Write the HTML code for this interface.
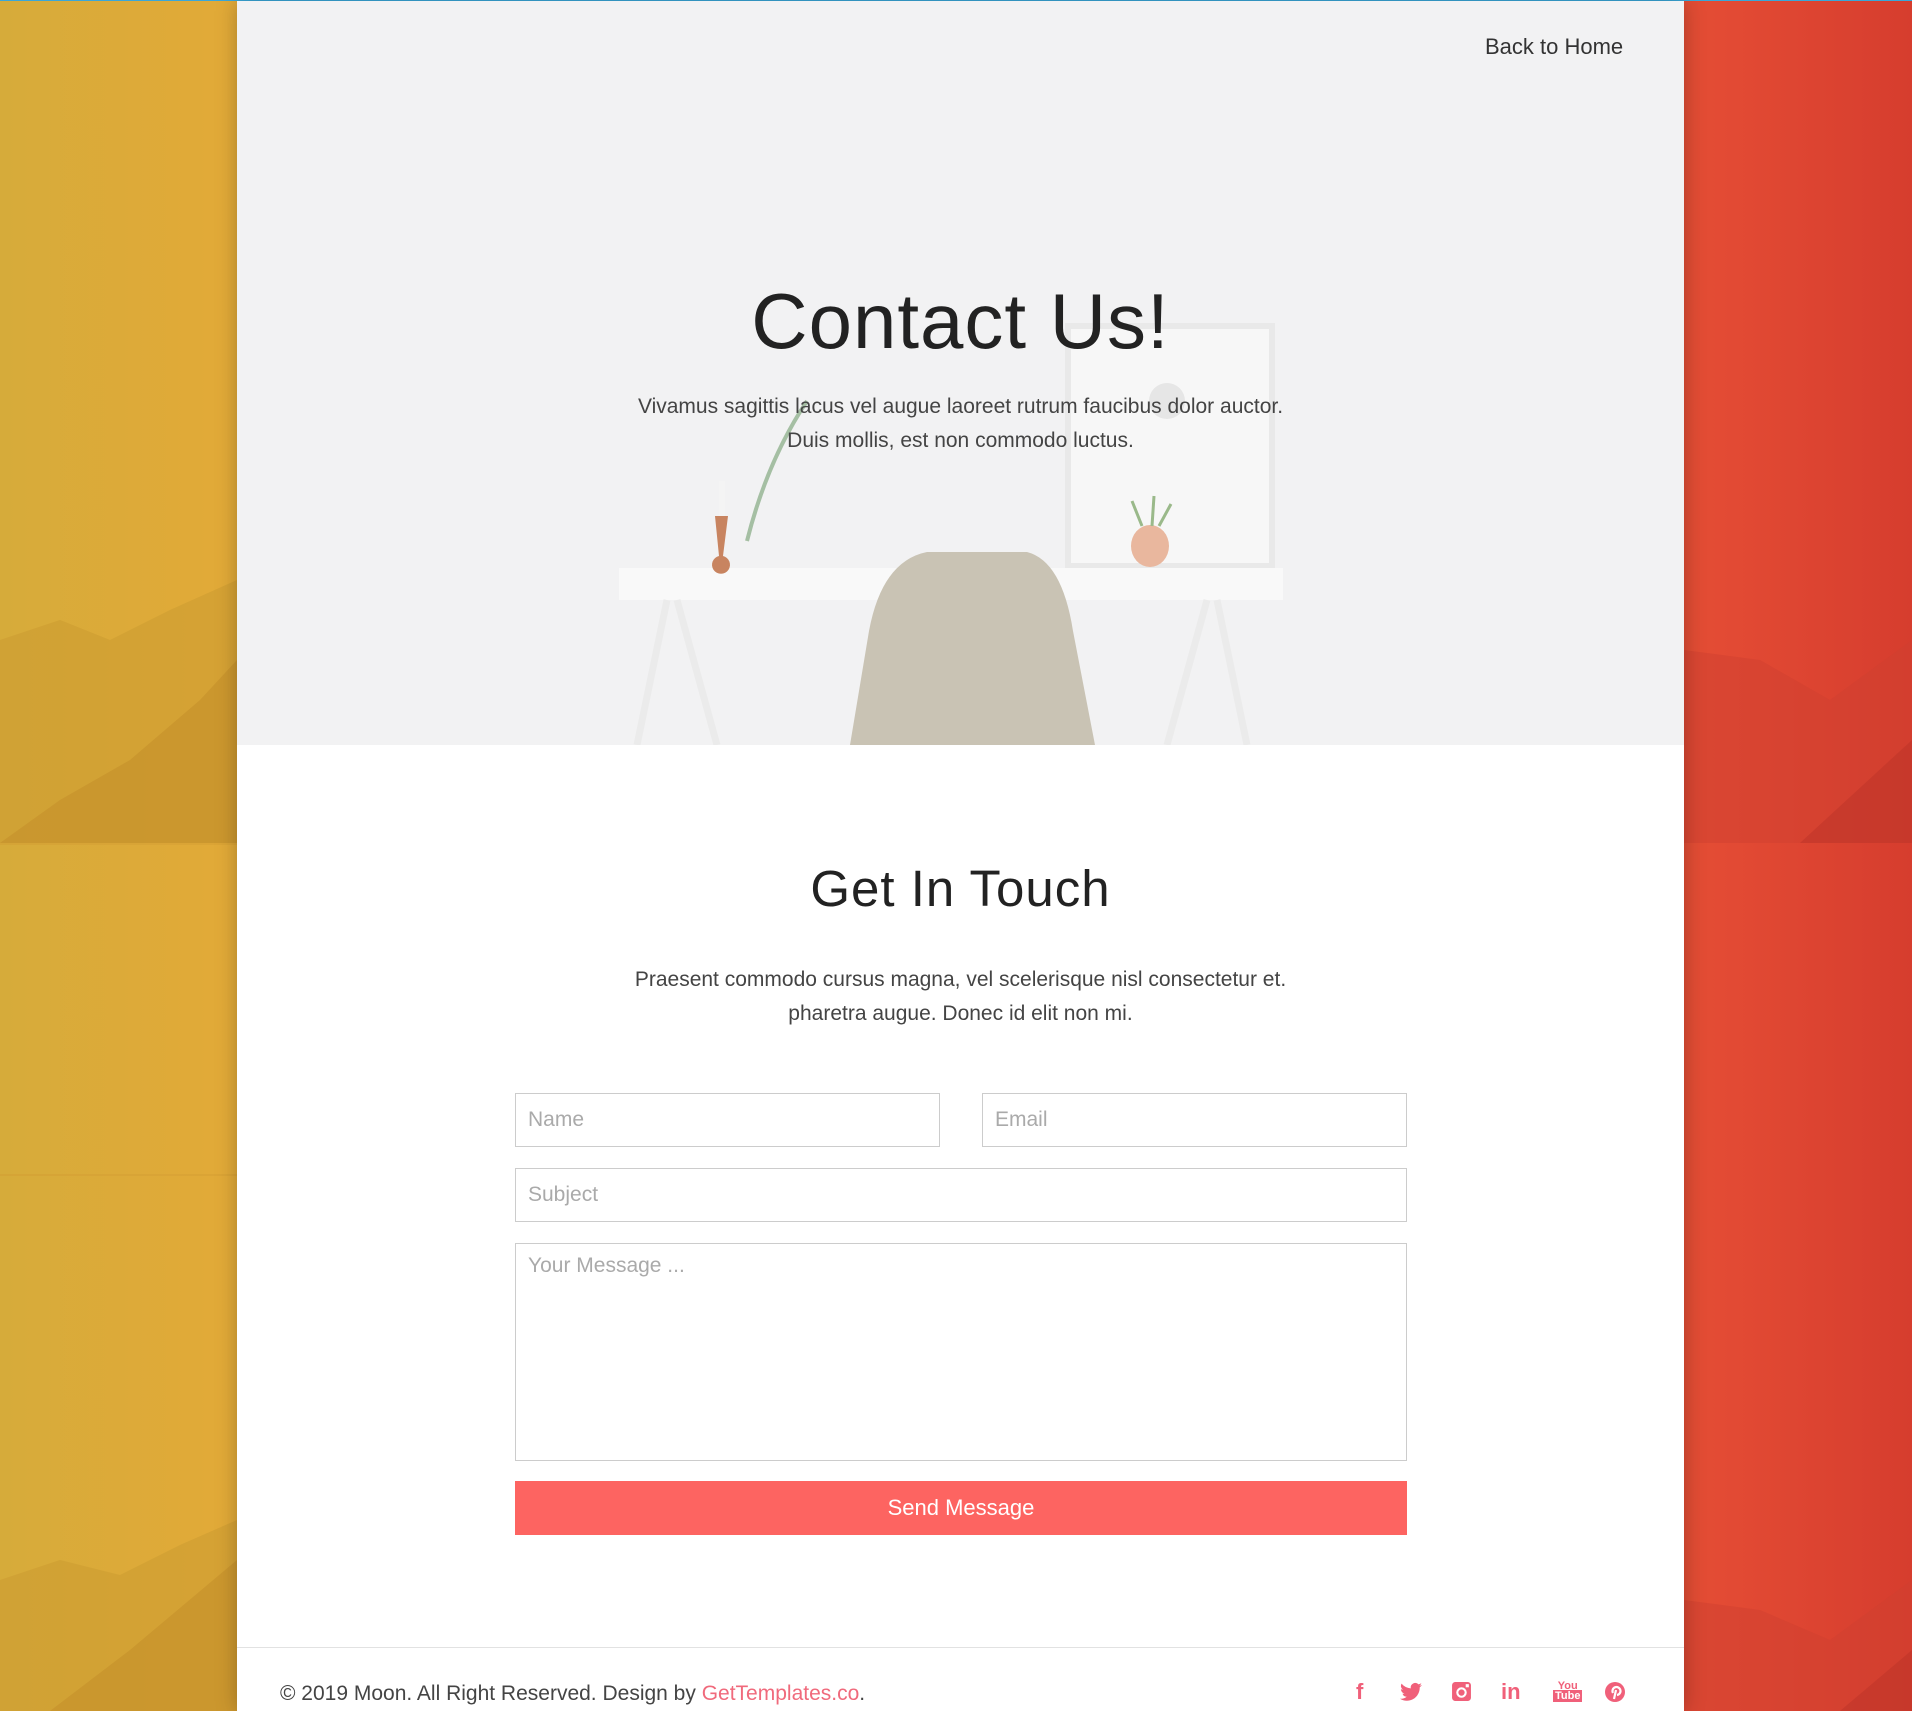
<!DOCTYPE html>
<html><head><meta charset="utf-8"><style>
html,body{margin:0;padding:0}
body{width:1912px;height:1711px;overflow:hidden;position:relative;font-family:"Liberation Sans",sans-serif;
background:linear-gradient(90deg,#d6ab3a 0%,#e2aa38 12%,#e0a536 20%,#d9833a 40%,#dc5c35 75%,#e34b34 90%,#d63d2e 100%);}
.bgsvg{position:absolute;left:0;top:0}
.topline{position:absolute;left:0;top:0;width:1912px;height:1px;background:#3aa7d8}
.wrap{position:absolute;left:237px;top:1px;width:1447px;height:1710px;background:#fff;box-shadow:0 0 20px rgba(0,0,0,.25)}
.hero{position:absolute;left:0;top:0;width:1447px;height:744px;background:#f2f2f3;overflow:hidden}
.hero svg{position:absolute;left:0;top:0}
.back{position:absolute;left:1248px;top:33px;font-size:22px;color:#333;font-weight:300}
h1{position:absolute;left:0;width:1447px;top:275px;margin:0;text-align:center;font-weight:300;font-size:78px;color:#222;letter-spacing:1px}
.p1{position:absolute;left:0;width:1447px;top:389px;text-align:center;font-size:21px;line-height:34px;color:#444}
h2{position:absolute;left:0;width:1447px;top:858px;margin:0;text-align:center;font-weight:300;font-size:51px;color:#222;letter-spacing:1px}
.p2{position:absolute;left:0;width:1447px;top:962px;text-align:center;font-size:21px;line-height:34px;color:#444}
.in{position:absolute;border:1px solid #ccc;box-sizing:border-box;font-size:21px;color:#aaa;padding-left:12px;background:#fff}
.btn{position:absolute;left:278px;top:1480px;width:892px;height:54px;background:#fd6461;color:#fff;font-size:22px;text-align:center;line-height:54px}
.fline{position:absolute;left:0;top:1646px;width:1447px;height:1px;background:#e2e2e2}
.foot{position:absolute;left:43px;top:1681px;font-size:21px;color:#444}
.foot a{color:#f06a7c;text-decoration:none}
.ic{position:absolute;top:1678px;color:#f0607a;font-size:22px;font-weight:bold}
</style></head><body>
<svg class="bgsvg" width="1912" height="1711">
<path d="M0 640 L60 620 L110 640 L170 610 L237 580 L237 843 L0 843Z" fill="#c99a30" opacity=".5"/>
<path d="M0 843 L60 800 L130 760 L200 700 L237 660 L237 843Z" fill="#c48f2c" opacity=".6"/>
<path d="M0 1580 L60 1560 L120 1575 L180 1545 L237 1520 L237 1711 L0 1711Z" fill="#c99a30" opacity=".5"/>
<path d="M50 1711 L130 1650 L237 1560 L237 1711Z" fill="#c48f2c" opacity=".6"/>
<path d="M1684 650 L1760 660 L1830 700 L1912 640 L1912 843 L1684 843Z" fill="#cf4030" opacity=".5"/>
<path d="M1800 843 L1912 740 L1912 843Z" fill="#c0352a" opacity=".6"/>
<path d="M1684 1600 L1760 1610 L1830 1640 L1912 1580 L1912 1711 L1684 1711Z" fill="#cf4030" opacity=".5"/>
<path d="M1840 1711 L1912 1650 L1912 1711Z" fill="#c0352a" opacity=".6"/>
<rect x="0" y="843" width="237" height="2" fill="#d19b33" opacity=".4"/>
<rect x="0" y="1174" width="237" height="2" fill="#d19b33" opacity=".4"/>
</svg>
<div class="topline"></div>
<div class="wrap">
<div class="hero">
<svg width="1447" height="744">
<rect x="831" y="325" width="204" height="240" fill="#f7f7f7" stroke="#e9e9e9" stroke-width="6"/>
<circle cx="930" cy="400" r="18" fill="#e6e6e6"/>
<rect x="382" y="567" width="664" height="32" fill="#f9f9f9"/>
<path d="M430 599 L400 744 M440 599 L480 744 M980 599 L1010 744 M970 599 L930 744" stroke="#ebebeb" stroke-width="7"/>
<path d="M478 515 l13 0 l-5 40 a9 9 0 1 1 -4 0z" fill="#c88460"/>
<rect x="482" y="480" width="6" height="35" fill="#f4f4f4"/>
<path d="M510 540 q20 -80 60 -140" stroke="#a5bfa3" stroke-width="4" fill="none"/>
<ellipse cx="913" cy="545" rx="19" ry="21" fill="#e9b79e"/>
<path d="M905 525 l-10 -25 M915 525 l2 -30 M922 525 l12 -22" stroke="#9ab98a" stroke-width="3"/>
<path d="M613 744 L632 630 Q645 560 690 551 L790 551 Q825 560 836 630 L858 744Z" fill="#c9c3b4"/>
</svg>
<div class="back">Back to Home</div>
<h1>Contact Us!</h1>
<div class="p1">Vivamus sagittis lacus vel augue laoreet rutrum faucibus dolor auctor.<br>Duis mollis, est non commodo luctus.</div>
</div>
<h2>Get In Touch</h2>
<div class="p2">Praesent commodo cursus magna, vel scelerisque nisl consectetur et.<br>pharetra augue. Donec id elit non mi.</div>
<div class="in" style="left:278px;top:1092px;width:425px;height:54px;line-height:52px">Name</div>
<div class="in" style="left:745px;top:1092px;width:425px;height:54px;line-height:52px">Email</div>
<div class="in" style="left:278px;top:1167px;width:892px;height:54px;line-height:52px">Subject</div>
<div class="in" style="left:278px;top:1242px;width:892px;height:218px;padding-top:10px">Your Message ...</div>
<div class="btn">Send Message</div>
<div class="fline"></div>
<div class="foot">© 2019 Moon. All Right Reserved. Design by <a>GetTemplates.co</a>.</div>
<div class="ic" style="left:1119px">f</div>
<svg class="ic" style="left:1163px;top:1681px" width="22" height="20" viewBox="0 0 24 20"><path fill="#f0607a" d="M24 2.4a10 10 0 0 1-2.8.8A5 5 0 0 0 23.3.5a10 10 0 0 1-3.1 1.2A4.9 4.9 0 0 0 11.8 6 14 14 0 0 1 1.7.9a4.9 4.9 0 0 0 1.5 6.6A4.9 4.9 0 0 1 1 6.9a4.9 4.9 0 0 0 3.9 4.8 5 5 0 0 1-2.2.1 4.9 4.9 0 0 0 4.6 3.4A9.9 9.9 0 0 1 0 17.3 14 14 0 0 0 7.5 19.5c9 0 14-7.5 14-14v-.6A10 10 0 0 0 24 2.4z"/></svg>
<svg class="ic" style="left:1214px;top:1680px" width="21" height="21" viewBox="0 0 20 20"><rect x="1" y="1" width="18" height="18" rx="3" fill="#f0607a"/><circle cx="10" cy="11" r="5" fill="#fff"/><circle cx="10" cy="11" r="3" fill="#f0607a"/><rect x="14" y="3" width="3" height="3" fill="#fff"/></svg>
<div class="ic" style="left:1264px">in</div>
<div class="ic" style="left:1316px;font-size:11px;line-height:10px;top:1680px;text-align:center">You<br><span style="background:#f0607a;color:#fff;padding:0 2px">Tube</span></div>
<svg class="ic" style="left:1367px;top:1680px" width="22" height="22" viewBox="0 0 22 22"><circle cx="11" cy="11" r="10" fill="#f0607a"/><path d="M10 18 L12 9 M9 12 a4 4 0 1 1 4 2" stroke="#fff" stroke-width="2.2" fill="none"/></svg>
</div>
</body></html>
